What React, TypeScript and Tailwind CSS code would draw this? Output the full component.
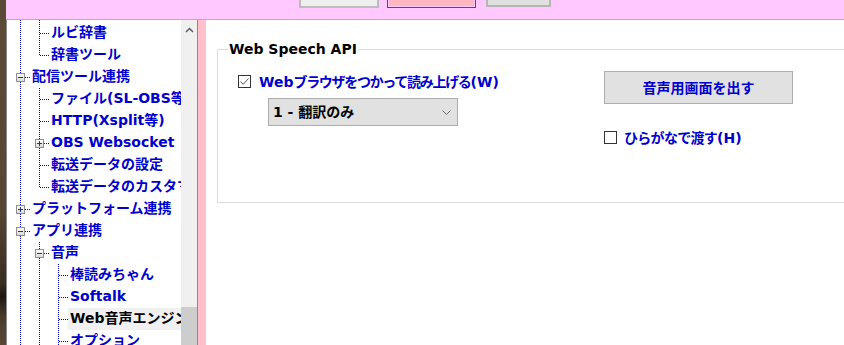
import React from "react";

type Row = {
  label: string;
  level: number;
  lines: boolean[]; // ancestor vertical lines, one per column before `level`
  last?: boolean;
  exp?: "+" | "-";
  selected?: boolean;
};

const BLUE = "#0000cd";

const rows: Row[] = [
  { label: "ユーザー辞書", level: 1, lines: [true] },
  { label: "ルビ辞書", level: 1, lines: [true] },
  { label: "辞書ツール", level: 1, lines: [true], last: true },
  { label: "配信ツール連携", level: 0, lines: [], exp: "-" },
  { label: "ファイル(SL-OBS等)", level: 1, lines: [true] },
  { label: "HTTP(Xsplit等)", level: 1, lines: [true] },
  { label: "OBS Websocket", level: 1, lines: [true], exp: "+" },
  { label: "転送データの設定", level: 1, lines: [true] },
  { label: "転送データのカスタマイズ", level: 1, lines: [true], last: true },
  { label: "プラットフォーム連携", level: 0, lines: [], exp: "+" },
  { label: "アプリ連携", level: 0, lines: [], exp: "-" },
  { label: "音声", level: 1, lines: [true], exp: "-" },
  { label: "棒読みちゃん", level: 2, lines: [true, true] },
  { label: "Softalk", level: 2, lines: [true, true] },
  { label: "Web音声エンジン", level: 2, lines: [true, true], selected: true },
  { label: "オプション", level: 2, lines: [true, true] },
];

function Guide({ on }: { on: boolean }) {
  return (
    <svg width="19" height="22" className="shrink-0" shapeRendering="crispEdges">
      {on && <line x1="13.5" y1="0" x2="13.5" y2="22" stroke={BLUE} strokeDasharray="1 1" />}
    </svg>
  );
}

function Junction({ last, exp }: { last?: boolean; exp?: "+" | "-" }) {
  return (
    <svg width="25" height="22" className="shrink-0" shapeRendering="crispEdges">
      <line x1="13.5" y1="0" x2="13.5" y2={last ? 12 : 22} stroke={BLUE} strokeDasharray="1 1" />
      <line x1="14" y1="11.5" x2="23" y2="11.5" stroke={BLUE} strokeDasharray="1 1" />
      {exp && (
        <g>
          <defs>
            <linearGradient id="bx" x1="0" y1="0" x2="0" y2="1">
              <stop offset="0" stopColor="#ffffff" />
              <stop offset="1" stopColor="#d8d8d8" />
            </linearGradient>
          </defs>
          <rect x="9.5" y="7.5" width="8" height="8" fill="url(#bx)" stroke="#8f8f8f" />
          <line x1="11" y1="11.5" x2="16" y2="11.5" stroke="#2a3470" />
          {exp === "+" && <line x1="13.5" y1="9" x2="13.5" y2="14" stroke="#2a3470" />}
        </g>
      )}
    </svg>
  );
}

function TreeRow({ row }: { row: Row }) {
  return (
    <div className="flex h-[22px] shrink-0 items-center">
      {row.lines.map((on, i) => (
        <Guide key={i} on={on} />
      ))}
      <Junction last={row.last} exp={row.exp} />
      <div
        className={`-ml-[2px] h-[22px] flex-1 whitespace-nowrap pl-[2px] text-[14px] font-bold leading-[21px] ${
          row.selected ? "bg-[#f0f0f0] text-black" : "text-[#0000cd]"
        }`}
      >
        {row.label}
      </div>
    </div>
  );
}

function CheckBox({ checked }: { checked?: boolean }) {
  return (
    <div className="flex h-[13px] w-[13px] shrink-0 items-center justify-center border border-[#333333] bg-white">
      {checked && (
        <svg width="11" height="11" viewBox="0 0 11 11">
          <path d="M1.5 5.5 L4.2 8.3 L9.5 2.5" fill="none" stroke="#555" strokeWidth="1" />
        </svg>
      )}
    </div>
  );
}

export default function App() {
  return (
    <div className="flex h-[345px] w-[844px] overflow-hidden bg-white font-['DejaVu_Sans','Noto_Sans_CJK_JP',sans-serif]">
      {/* desktop wallpaper sliver */}
      <div className="w-[6px] shrink-0 bg-[linear-gradient(180deg,#5c4a37_0%,#584735_60%,#3a2e22_82%,#1e1812_86%,#4a3b2c_92%,#5a4836_100%)]" />

      <div className="flex min-w-0 flex-1 flex-col">
        {/* top tab strip */}
        <div className="flex h-[20px] shrink-0 items-start border-b border-[#b4b0c4] bg-[#ffc8ff]">
          <div className="ml-[293px] h-[8px] w-[80px] border-x-2 border-b-2 border-[#bdbdbd] bg-[#efefef]" />
          <div className="ml-[8px] h-[8px] w-[89px] border-x border-b border-[#1b5ea8] p-[1px] pt-0">
            <div className="h-full bg-[#ffb6c1]" />
          </div>
          <div className="ml-[10px] h-[7px] w-[65px] border-x-2 border-b-2 border-[#b5b5b5] bg-[#e1e1e1]" />
        </div>

        <div className="flex min-h-0 flex-1">
          {/* tree view */}
          <div className="flex w-[192px] shrink-0 border-x border-l-[#8a8a8a] border-r-[#8a8a8a] bg-white">
            <div className="min-w-0 flex-1 overflow-hidden">
              <div className="-mt-[20px] flex flex-col">
                {rows.map((r, i) => (
                  <TreeRow key={i} row={r} />
                ))}
              </div>
            </div>
            <div className="flex w-[16px] shrink-0 flex-col bg-[#f0f0f0]">
              <div className="flex h-[20px] items-center justify-center">
                <svg width="9" height="6" viewBox="0 0 9 6">
                  <path d="M1 5 L4.5 1.5 L8 5" fill="none" stroke="#606060" strokeWidth="1.5" />
                </svg>
              </div>
              <div className="flex-1" />
              <div className="h-[38px] bg-[#cdcdcd]" />
            </div>
          </div>

          {/* pink splitter */}
          <div className="w-[8px] shrink-0 bg-[#ffc0cb]" />

          {/* settings content */}
          <div className="min-w-0 flex-1 overflow-hidden bg-white">
            <div className="ml-[11px] mt-[29px] h-[154px] w-[700px] border border-[#dcdcdc]">
              <div className="-mb-[9px] -mt-[11px] ml-[10px] w-fit bg-white px-[1px] text-[14px] font-bold leading-[20px] text-black">
                Web Speech API
              </div>

              <div className="flex">
                <div className="ml-[20px] flex w-[366px] shrink-0 flex-col">
                  <div className="mt-[25px] flex h-[13px] items-center gap-[8px]">
                    <CheckBox checked />
                    <span className="whitespace-nowrap text-[14px] font-bold leading-[20px] text-[#0000cd]">
                      Web<span className="tracking-[-1.3px]">ブラウザをつかって読み上げる</span>(W)
                    </span>
                  </div>
                  <div className="ml-[30px] mt-[10px] flex h-[28px] w-[190px] items-center justify-between border border-[#adadad] bg-[#e1e1e1] pl-[4px] pr-[6px]">
                    <span className="whitespace-nowrap text-[14px] font-bold leading-[20px] text-black">1 - 翻訳のみ</span>
                    <svg width="9" height="5" viewBox="0 0 9 5">
                      <path d="M0.5 0.5 L4.5 4.5 L8.5 0.5" fill="none" stroke="#6d6d6d" strokeWidth="1" />
                    </svg>
                  </div>
                </div>

                <div className="flex flex-col">
                  <div className="mt-[21px] flex h-[33px] w-[189px] items-center justify-center border border-[#adadad] bg-[#e1e1e1] text-[14px] font-bold leading-[20px] text-[#0000cd]">
                    音声用画面を出す
                  </div>
                  <div className="mt-[27px] flex h-[13px] items-center gap-[7px]">
                    <CheckBox />
                    <span className="whitespace-nowrap text-[14px] font-bold leading-[20px] text-[#0000cd]">
                      <span className="tracking-[-0.7px]">ひらがなで渡す</span>(H)
                    </span>
                  </div>
                </div>
              </div>
            </div>
          </div>
        </div>
      </div>
    </div>
  );
}
